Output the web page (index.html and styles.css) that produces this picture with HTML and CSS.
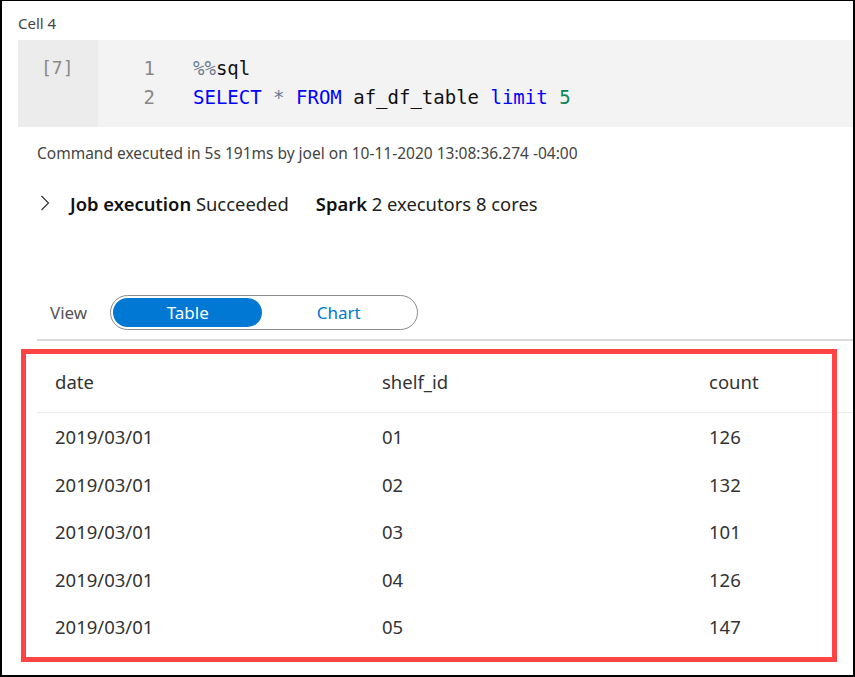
FILE: index.html
```html
<!DOCTYPE html>
<html>
<head>
<meta charset="utf-8">
<link rel="stylesheet" href="styles.css">
</head>
<body>
<div class="frame">
  <div class="cell-title">Cell 4</div>
  <div class="code-cell">
    <div class="prompt">[7]</div>
    <div class="code">
      <div class="line"><span class="ln">1</span><span class="src"><span class="tok-magic">%%</span>sql</span></div>
      <div class="line"><span class="ln">2</span><span class="src"><span class="tok-kw">SELECT</span> <span class="tok-op">*</span> <span class="tok-kw">FROM</span> af_df_table <span class="tok-kw">limit</span> <span class="tok-num">5</span></span></div>
    </div>
  </div>
  <div class="output">
    <div class="status">Command executed in 5s 191ms by joel on 10-11-2020 13:08:36.274 -04:00</div>
    <div class="jobs">
      <svg class="chev" width="10" height="16" viewBox="0 0 10 16"><path d="M1.5 1 L8.5 8 L1.5 15" fill="none" stroke="#333" stroke-width="1.2"/></svg>
      <span class="job"><b>Job execution</b> Succeeded</span>
      <span class="job"><b>Spark</b> 2 executors 8 cores</span>
    </div>
    <div class="view-bar">
      <span class="view-label">View</span>
      <div class="toggle">
        <span class="opt active">Table</span>
        <span class="opt">Chart</span>
      </div>
    </div>
    <div class="table-wrap">
      <div class="table">
        <div class="row head"><span>date</span><span>shelf_id</span><span>count</span></div>
        <div class="row"><span>2019/03/01</span><span>01</span><span>126</span></div>
        <div class="row"><span>2019/03/01</span><span>02</span><span>132</span></div>
        <div class="row"><span>2019/03/01</span><span>03</span><span>101</span></div>
        <div class="row"><span>2019/03/01</span><span>04</span><span>126</span></div>
        <div class="row"><span>2019/03/01</span><span>05</span><span>147</span></div>
      </div>
      <div class="highlight"></div>
    </div>
  </div>
</div>
</body>
</html>
```
FILE: styles.css
```css
* { box-sizing: border-box; }
html, body { margin: 0; padding: 0; background: #fff; }
body { font-family: "Noto Sans", "Open Sans", sans-serif; color: #333; }

.frame {
  width: 855px;
  height: 677px;
  border: 2px solid #000;
  border-top-width: 1px;
  overflow: hidden;
  position: relative;
}

.cell-title {
  margin: 12px 0 0 16px;
  height: 20px;
  line-height: 20px;
  font-size: 15px;
  color: #444;
}

.code-cell {
  margin: 7px 0 0 16px;
  height: 87px;
  display: flex;
  background: #f3f3f3;
}
.prompt {
  width: 80px;
  background: #ececec;
  font-family: "DejaVu Sans Mono", monospace;
  font-size: 18px;
  color: #8a8a8a;
  padding: 16px 0 0 23px;
  line-height: 24px;
}
.code {
  padding-top: 14px;
  font-family: "DejaVu Sans Mono", monospace;
  font-size: 19px;
  color: #111;
}
.line { display: flex; height: 29px; line-height: 29px; }
.ln { width: 57px; text-align: right; color: #888; }
.src { margin-left: 38px; white-space: pre; }
.tok-magic, .tok-op { color: #6b7a90; }
.tok-kw { color: #0000ff; }
.tok-num { color: #098658; }

.output { padding-left: 35px; }
.status {
  margin-top: 16px;
  font-size: 15.5px;
  line-height: 20px;
  color: #444;
}
.jobs {
  margin-top: 28px;
  display: flex;
  align-items: center;
  height: 24px;
  font-size: 18.4px;
  color: #222;
}
.chev { margin: 0 20px 0 3px; }
.job { margin-right: 27px; }
.job b { font-weight: 600; color: #111; }

.view-bar {
  margin-top: 80px;
  display: flex;
  align-items: center;
  height: 35px;
}
.view-label {
  font-size: 17px;
  color: #555;
  margin: 0 23px 0 13px;
}
.toggle {
  display: flex;
  width: 308px;
  height: 35px;
  border: 1px solid #8a8a8a;
  border-radius: 18px;
  padding: 2px;
}
.opt {
  flex: 0 0 149px;
  display: flex;
  align-items: center;
  justify-content: center;
  font-size: 17px;
  color: #0078d4;
  border-radius: 15px;
}
.opt + .opt { flex: 1; }
.opt.active { background: #0078d4; color: #fff; }

.table-wrap {
  position: relative;
  margin-top: 9px;
  border-top: 2px solid #dcdcdc;
}
.table { padding-top: 9px; }
.row {
  display: grid;
  grid-template-columns: 327px 327px 327px;
  height: 47.5px;
  align-items: center;
  font-size: 18.5px;
  color: #333;
}
.row span { padding-left: 18px; }
.row.head { height: 63px; border-bottom: 1px solid #ececec; }
.highlight {
  position: absolute;
  left: -16px;
  top: 8px;
  width: 816px;
  height: 313px;
  border: 5px solid #ff4444;
  pointer-events: none;
}
```
